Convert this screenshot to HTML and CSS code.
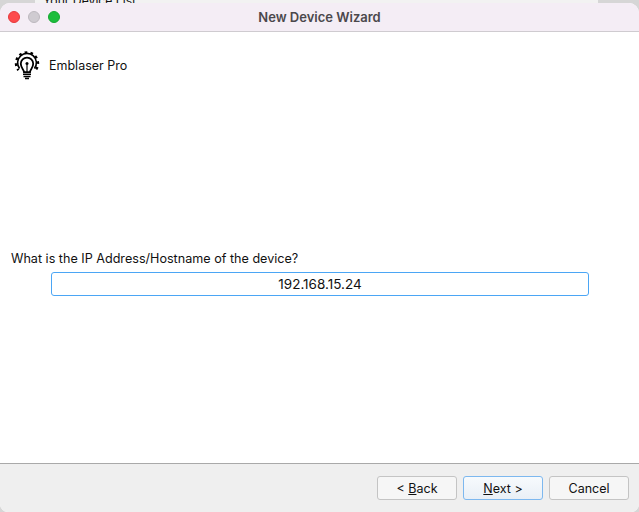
FILE: index.html
```html
<!DOCTYPE html>
<html lang="en">
<head>
    <meta charset="UTF-8">
    <meta name="viewport" content="width=device-width, initial-scale=1.0">
    <title>New Device Wizard</title>
    <link rel="stylesheet" href="styles.css">
</head>
<body>
    <div class="behind">
        <span class="behind-title">Your Device List</span>
    </div>
    <div class="window">
        <div class="titlebar">
            <div class="lights">
                <span class="light red"></span>
                <span class="light grey"></span>
                <span class="light green"></span>
            </div>
            <span class="title">New Device Wizard</span>
        </div>

        <div class="content">
            <div class="brand">
                <svg class="brand-icon" viewBox="0 0 28 32" width="28" height="32" fill="none" stroke="#000">
                    <path d="M6.6 19.6A9.4 9.4 0 1 1 21.4 19.6" stroke-width="1.6"/>
                    <path d="M5.4 21.2A11 11 0 1 1 22.6 21.2" stroke-width="2.4" stroke-dasharray="2.6 3.2" stroke-dashoffset="1"/>
                    <path d="M11 23.2c0-2.8-3.2-4.2-3.2-8.4a6.2 6.2 0 0 1 12.4 0c0 4.2-3.2 5.6-3.2 8.4z" fill="#fff" stroke-width="1.8"/>
                    <path d="M14 15.5v7.5" stroke-width="1.2"/>
                    <circle cx="14" cy="14.4" r="1.5" fill="#000" stroke="none"/>
                    <path d="M10 25.2h8M10.5 27.4h7M12 29.6h4" stroke-width="1.5"/>
                </svg>
                <span class="brand-name">Emblaser Pro</span>
            </div>

            <div class="field">
                <label class="field-label" for="host">What is the IP Address/Hostname of the device?</label>
                <input class="field-input" id="host" type="text" value="192.168.15.24">
            </div>
        </div>

        <div class="footer">
            <button class="btn">&lt; <u>B</u>ack</button>
            <button class="btn btn-focus"><u>N</u>ext &gt;</button>
            <button class="btn">Cancel</button>
        </div>
    </div>
</body>
</html>
```

FILE: styles.css
```css
html, body { height: 100%; }
body { margin: 0; background: #d6d6d6; font-family: "Inter", "Liberation Sans", Arial, sans-serif; font-size: 12.5px; color: #111; overflow: hidden; display: flex; flex-direction: column; }

.behind { height: 3px; flex: none; margin-left: 35px; margin-right: 41px; background: #f2f2f2; overflow: hidden; line-height: 0; }
.behind-title { display: block; padding-left: 8px; font-size: 12.2px; line-height: 6px; margin-top: -2px; color: #111; }

.window { flex: 1; display: flex; flex-direction: column; background: #fff; border-radius: 10px 10px 8px 8px; overflow: hidden; min-height: 0; }

.titlebar { height: 28px; flex: none; display: flex; align-items: center; justify-content: center; position: relative; background: #f4edf5; border-bottom: 1px solid #cfcbd0; }
.lights { position: absolute; left: 8px; top: 8px; display: flex; gap: 8px; }
.light { width: 12px; height: 12px; border-radius: 50%; box-sizing: border-box; }
.red { background: #fd4a4c; border: 1px solid #e5393c; }
.grey { background: #cfcbd1; border: 1px solid #bcb8be; }
.green { background: #1cbd3c; border: 1px solid #14a831; }
.title { font-size: 13px; font-weight: 600; color: #4b484c; margin-top: -1px; }

.content { flex: 1; display: flex; flex-direction: column; min-height: 0; }

.brand { display: flex; align-items: center; gap: 8px; padding: 17px 0 0 13px; height: 32px; }
.brand-icon { flex: none; }
.brand-name { font-size: 12.5px; }

.field { margin-top: 170px; padding: 0 11px; }
.field-label { display: block; font-size: 12.6px; line-height: 16px; }
.field-input { display: block; box-sizing: border-box; width: 538px; height: 24px; margin: 5px 0 0 40px; border: 1px solid #4ba6f5; border-radius: 3px; outline: none; background: #fff; text-align: center; font: inherit; font-size: 13.5px; color: #111; }

.footer { height: 49px; flex: none; display: flex; justify-content: flex-end; align-items: flex-start; gap: 6px; padding: 12px 10px 0 0; box-sizing: border-box; background: #efefef; border-top: 1px solid #a9a9a9; }
.btn { width: 80px; height: 24px; padding: 0; border: 1px solid #c4c4c4; border-radius: 3px; background: #f6f6f6; font: inherit; color: #111; }
.btn-focus { border-color: #7db8ef; background: linear-gradient(#f7fafd, #e9eff6); }
```
